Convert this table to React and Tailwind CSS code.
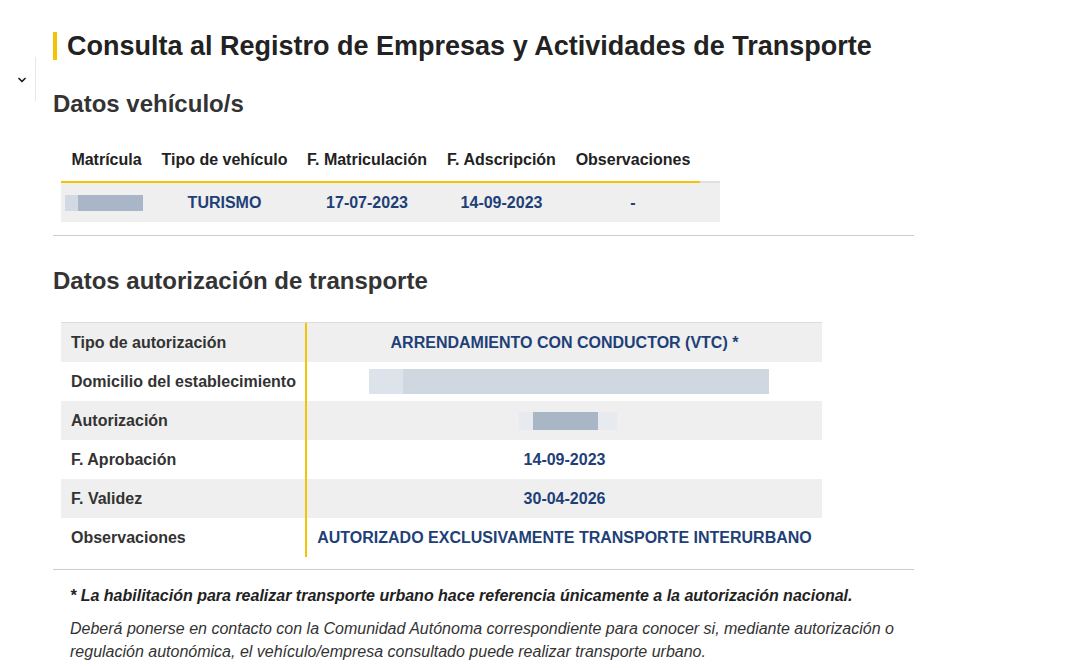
import { ChevronDown } from "lucide-react";

const font = { fontFamily: '"Liberation Sans", Arial, sans-serif' };

const vehiculoCols = [
  { label: "Matrícula", w: "w-[91px]" },
  { label: "Tipo de vehículo", w: "w-[145px]" },
  { label: "F. Matriculación", w: "w-[140px]" },
  { label: "F. Adscripción", w: "w-[129px]" },
  { label: "Observaciones", w: "w-[134px]" },
];

const AuthRow = ({ label, gray, children }) => (
  <div className={`flex h-[39px] items-center ${gray ? "bg-[#efefef]" : "bg-white"}`}>
    <div className="w-[244px] pl-[10px] text-[16px] leading-[20px] font-bold text-[#333]">{label}</div>
    <div className="w-[2px] h-full bg-[#f5c400]" />
    <div className="flex-1 flex justify-center text-[16px] leading-[20px] font-bold text-[#1e3f78]">{children}</div>
  </div>
);

const App = () => {
  return (
    <div className="bg-white w-[1085px] h-[668px] overflow-hidden flex" style={font}>
      <div className="w-[53px] pt-[57px] flex">
        <div className="w-[36px] h-[44px] border-r border-[#e8e8e8] flex items-center justify-center pl-[9px]">
          <ChevronDown size={12} strokeWidth={3.5} className="text-[#222] mt-[1px]" />
        </div>
      </div>
      <div className="w-[861px]">
        <div className="mt-[32px] border-l-4 border-[#f5c400] pl-[10px] h-[28px] flex items-center">
          <h1 className="text-[27px] font-bold text-[#222] leading-none">
            Consulta al Registro de Empresas y Actividades de Transporte
          </h1>
        </div>

        <h2 className="mt-[32px] text-[24px] font-bold text-[#333] leading-none">Datos vehículo/s</h2>

        <div className="mt-[27px] ml-[8px] w-[659px]">
          <div className="flex h-[38px] items-center pb-[4px]">
            {vehiculoCols.map((c) => (
              <div key={c.label} className={`${c.w} text-center text-[16px] leading-[20px] font-bold text-[#222]`}>
                {c.label}
              </div>
            ))}
          </div>
          <div className="flex">
            <div className="w-[639px] h-[2px] bg-[#f5c400]" />
            <div className="w-[20px] h-[2px] bg-[#e0e0e0]" />
          </div>
          <div className="flex h-[39px] items-center bg-[#efefef] text-[16px] leading-[20px] font-bold text-[#1e3f78]">
            <div className="w-[91px] flex pl-[4px]">
              <div className="w-[13px] h-[16px] bg-[#d3d9e2]" />
              <div className="w-[65px] h-[16px] bg-[#a9b6c8]" />
            </div>
            <div className="w-[145px] text-center">TURISMO</div>
            <div className="w-[140px] text-center">17-07-2023</div>
            <div className="w-[129px] text-center">14-09-2023</div>
            <div className="w-[134px] text-center">-</div>
          </div>
        </div>

        <div className="mt-[13px] h-px bg-[#cccccc]" />

        <h2 className="mt-[33px] text-[24px] font-bold text-[#333] leading-none">
          Datos autorización de transporte
        </h2>

        <div className="mt-[29px] ml-[8px] w-[761px] border-t border-[#dddddd]">
          <AuthRow label="Tipo de autorización" gray>ARRENDAMIENTO CON CONDUCTOR (VTC) *</AuthRow>
          <AuthRow label="Domicilio del establecimiento">
            <div className="flex h-[25px] ml-[8px]">
              <div className="w-[34px] bg-[#dde3ea]" />
              <div className="w-[366px] bg-[#cfd7e1]" />
            </div>
          </AuthRow>
          <AuthRow label="Autorización" gray>
            <div className="flex h-[18px] ml-[6px]">
              <div className="w-[14px] bg-[#e7eaee]" />
              <div className="w-[65px] bg-[#a9b6c6]" />
              <div className="w-[19px] bg-[#e7eaee]" />
            </div>
          </AuthRow>
          <AuthRow label="F. Aprobación">14-09-2023</AuthRow>
          <AuthRow label="F. Validez" gray>30-04-2026</AuthRow>
          <AuthRow label="Observaciones">AUTORIZADO EXCLUSIVAMENTE TRANSPORTE INTERURBANO</AuthRow>
        </div>

        <div className="mt-[12px] h-px bg-[#cccccc]" />

        <p className="mt-[16px] ml-[17px] text-[16px] leading-[20px] font-bold italic text-[#222]">
          * La habilitación para realizar transporte urbano hace referencia únicamente a la autorización nacional.
        </p>
        <p className="mt-[11px] ml-[17px] text-[16px] italic text-[#333] leading-[23px] w-[840px]">
          Deberá ponerse en contacto con la Comunidad Autónoma correspondiente para conocer si, mediante autorización o
          regulación autonómica, el vehículo/empresa consultado puede realizar transporte urbano.
        </p>
      </div>
    </div>
  );
};

export default App;
